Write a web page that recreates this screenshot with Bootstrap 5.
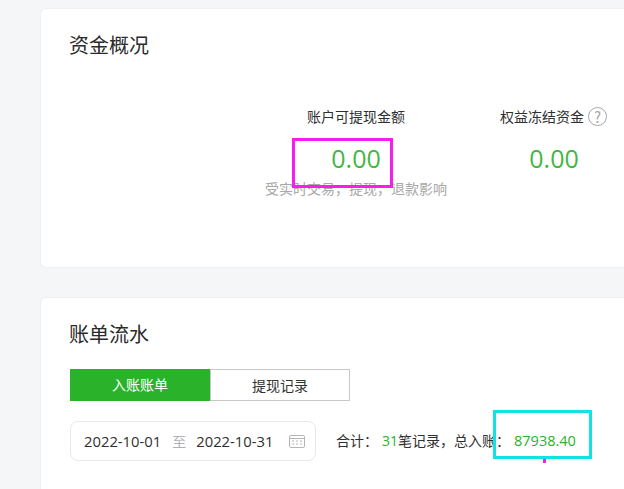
<!DOCTYPE html>
<html lang="zh"><head><meta charset="utf-8"><title>资金概况</title>
<link href="https://cdn.jsdelivr.net/npm/bootstrap@5.3.0/dist/css/bootstrap.min.css" rel="stylesheet">
<style>
html,body{height:489px;overflow:hidden}
body{background:#f5f6f8;font-family:"Open Sans","Noto Sans CJK SC",sans-serif;color:#333;font-size:14px;padding:8px 0 0 40px;width:624px;position:relative}
.panel{background:#fff;border:1px solid #eeeff1;border-right:0;border-radius:6px 0 0 6px;padding:0 0 0 29px;width:590px}
.panel-one{height:260px;margin-bottom:29px}
.panel-two{height:300px}
.panel-title{font-size:20px;font-weight:400;line-height:28px;margin:0 0 0 -1px;color:#2a2a2a;font-family:"Noto Sans CJK SC",sans-serif;padding-top:22px}
.stats{padding-left:195px;margin-top:47px;width:540px}
.stat-a{width:182px;text-align:center}
.stat-b{width:130px;margin-left:6px;padding-left:47px;white-space:nowrap}
.stat-label{line-height:20px;font-family:"Noto Sans CJK SC",sans-serif;font-size:14px;color:#2f2f2f}
.stat-num{font-size:25px;line-height:34px;color:#3fb83f;margin-top:15px}
.stat-b .stat-num{text-align:center;width:108px}
.stat-note{color:#a8a8a8;line-height:20px;white-space:nowrap;margin-top:3px;font-family:"Noto Sans CJK SC",sans-serif}
.help-mark{width:19px;height:19px;border:1px solid #a8a8a8;border-radius:50%;color:#a8a8a8;font-size:15px;line-height:17px;text-align:center;margin-left:4px;flex:none}
.tabs{margin-top:21px;width:280px;height:32px}
.tab-on,.tab-off{width:140px;height:32px;line-height:30px;text-align:center;font-family:"Noto Sans CJK SC",sans-serif}
.tab-on{background:#2bb22b;color:#fff}
.tab-off{border:1px solid #c8c8c8;color:#333}
.filter{margin-top:20px}
.range{width:246px;height:40px;border:1px solid #e6e8ec;border-radius:8px;padding:0 10px 0 13px;color:#2f2f2f;font-size:14.8px}
.range-sep{color:#b0b0b0;margin:0 10px 0 11px;font-size:14px;font-family:"Noto Sans CJK SC",sans-serif}
.range-ico{margin-left:auto}
.totals{margin-left:20px;font-size:14px;white-space:nowrap;font-family:"Noto Sans CJK SC",sans-serif;color:#2f2f2f}
.totals b{font-weight:400;color:#2bb22b;font-family:"Open Sans",sans-serif}
.count{margin-left:4px}
.totals .sum{margin-left:4px;font-size:14.5px}
.mark-box{position:absolute;border-style:solid;border-width:3px;pointer-events:none}
.mark-m{left:292px;top:138px;width:101px;height:50px;border-color:#f81cf0}
.mark-c{left:493px;top:410px;width:99px;height:49px;border-color:#12e2e2}
.mark-dot{position:absolute;left:543px;top:459px;width:3px;height:4px;background:#f81cf0}
</style></head><body>
<section class="panel panel-one">
<h2 class="panel-title">资金概况</h2>
<div class="stats d-flex">
<div class="stat-a"><div class="stat-label">账户可提现金额</div><div class="stat-num">0.00</div><div class="stat-note">受实时交易&#xFF0C;提现&#xFF0C;退款影响</div></div>
<div class="stat-b"><div class="stat-label d-flex align-items-center">权益冻结资金<span class="help-mark">?</span></div><div class="stat-num">0.00</div></div>
</div>
</section>
<section class="panel panel-two">
<h2 class="panel-title">账单流水</h2>
<div class="tabs d-flex"><div class="tab-on">入账账单</div><div class="tab-off">提现记录</div></div>
<div class="filter d-flex align-items-center">
<div class="range d-flex align-items-center"><span>2022-10-01</span><span class="range-sep">至</span><span>2022-10-31</span>
<svg class="range-ico" width="16" height="14" viewBox="0 0 16 14" fill="none" stroke="#b4b4b4"><rect x=".5" y="1.5" width="15" height="12" rx="1.5"/><path d="M.5 4.5h15"/><path d="M3 7h2M7 7h2M11 7h2M3 10h2M7 10h2M11 10h2"/></svg></div>
<div class="totals">合计&#xFF1A;<b class="count">31</b>笔记录&#xFF0C;总入账&#xFF1A;<b class="sum">87938.40</b></div>
</div>
</section>
<div class="mark-box mark-m"></div><div class="mark-box mark-c"></div><div class="mark-dot"></div>
</body></html>
